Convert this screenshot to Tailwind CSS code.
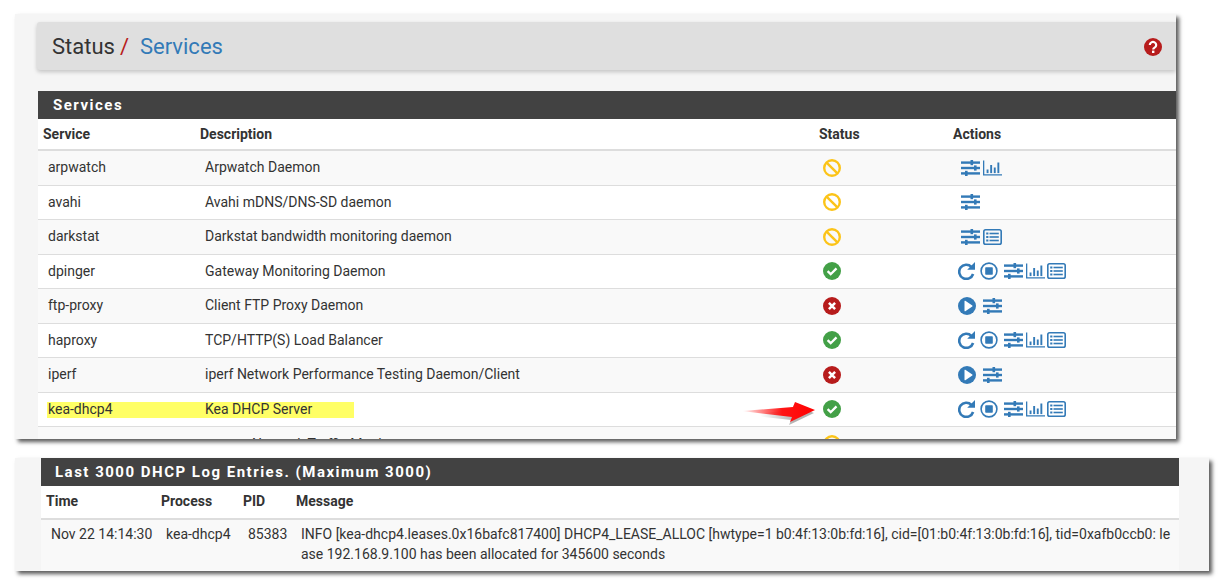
<!DOCTYPE html>
<html><head><meta charset="utf-8"><script src="https://cdn.jsdelivr.net/npm/@tailwindcss/browser@4"></script></head>
<body class="bg-white w-[1226px] h-[587px] overflow-hidden font-['Roboto',sans-serif] text-[#333]">
<svg class="hidden">
<symbol id="sl" viewBox="0 0 19 16"><g fill="#337ab7"><rect x="0" y="1.4" width="19" height="2.4"/><rect x="0" y="6.8" width="19" height="2.4"/><rect x="0" y="12.2" width="19" height="2.4"/><rect x="9.5" y="0" width="2.6" height="5.2"/><rect x="13" y="5.4" width="2.6" height="5.2"/><rect x="4" y="10.8" width="2.6" height="5.2"/></g></symbol>
<symbol id="ch" viewBox="0 0 19 16"><g fill="#337ab7"><path d="M0 .5h1.3v13.7H19v1.4H0z"/><rect x="3.6" y="9.5" width="1.9" height="3.6"/><rect x="7.2" y="5" width="1.9" height="8.1"/><rect x="10.8" y="7.5" width="1.9" height="5.6"/><rect x="14.4" y="2.5" width="1.9" height="10.6"/></g></symbol>
<symbol id="li" viewBox="0 0 19 16"><rect x=".8" y=".8" width="17.4" height="14.4" rx="1.8" fill="none" stroke="#337ab7" stroke-width="1.6"/><g fill="#337ab7"><rect x="3.2" y="3.5" width="2.2" height="2"/><rect x="3.2" y="7" width="2.2" height="2"/><rect x="3.2" y="10.5" width="2.2" height="2"/><rect x="6.5" y="3.7" width="9.3" height="1.6"/><rect x="6.5" y="7.2" width="9.3" height="1.6"/><rect x="6.5" y="10.7" width="9.3" height="1.6"/></g></symbol>
<symbol id="re" viewBox="0 0 17 18"><path d="M13.4 4.8A7.1 7.1 0 1 0 15.1 12" fill="none" stroke="#337ab7" stroke-width="2.6"/><path d="M17 0v7.8H9.2z" fill="#337ab7"/></symbol>
<symbol id="st" viewBox="0 0 18 18"><circle cx="9" cy="9" r="7.9" fill="none" stroke="#337ab7" stroke-width="1.6"/><rect x="5.2" y="5.2" width="7.6" height="7.6" rx=".8" fill="#337ab7"/></symbol>
<symbol id="pl" viewBox="0 0 18 18"><circle cx="9" cy="9" r="9" fill="#337ab7"/><path d="M6.5 4.2v9.6a.5.5 0 0 0 .8.4l7-4.8a.5.5 0 0 0 0-.8l-7-4.8a.5.5 0 0 0-.8.4z" fill="#fff"/></symbol>
<symbol id="ban" viewBox="0 0 18 18"><circle cx="9" cy="9" r="7.8" fill="none" stroke="#fcc419" stroke-width="2.4"/><path d="M3.6 3.6 14.4 14.4" stroke="#fcc419" stroke-width="2.4"/></symbol>
<symbol id="ok" viewBox="0 0 18 18"><circle cx="9" cy="9" r="9" fill="#43a047"/><path d="M4.6 9.2 7.7 12.2 13.5 6.4" fill="none" stroke="#fff" stroke-width="2.3"/></symbol>
<symbol id="no" viewBox="0 0 18 18"><circle cx="9" cy="9" r="9" fill="#b71c1c"/><path d="M5.9 5.9 12.1 12.1M12.1 5.9 5.9 12.1" fill="none" stroke="#fff" stroke-width="2.5"/></symbol>
</svg>

<main class="pt-[14px] pl-[15px]">
<section class="relative w-[1161px] h-[425px] overflow-hidden bg-[#f5f5f5]">
  <div class="ml-[22px] mt-[8px] h-[48px] bg-[#dfdfdf] shadow-[0_2px_4px_rgba(0,0,0,0.2)] flex items-center justify-between pl-[15px] pr-[14px] rounded-l-[3px]">
    <h1 class="text-[22px] leading-none font-normal flex mt-[2px]"><span>Status</span><span class="text-[#b71c1c] ml-[5px]">/</span><span class="text-[#337ab7] ml-[11px]">Services</span></h1>
    <svg class="w-[18px] h-[18px] mt-[2px]" viewBox="0 0 18 18"><circle cx="9" cy="9" r="9" fill="#b71c1c"/><path d="M5.8 7a3.2 3 0 1 1 4.8 2.6c-1 .6-1.4 1-1.4 2" fill="none" stroke="#fff" stroke-width="2.2"/><rect x="8" y="12.6" width="2.4" height="2.4" fill="#fff"/></svg>
  </div>
  <div class="ml-[23px] mt-[21px] h-[28px] bg-[#424242] text-white font-bold text-[15px] tracking-[1.5px] pl-[15px] flex items-center">Services</div>
  <div class="ml-[23px] bg-white text-[14px]">
    <div class="grid grid-cols-[157px_619px_134px_1fr] h-[32px] border-b-2 border-[#ddd] items-center font-bold"><span class="pl-[5px]">Service</span><span class="pl-[5px]">Description</span><span class="pl-[5px]">Status</span><span class="pl-[5px]">Actions</span></div>

    <div class="grid grid-cols-[157px_619px_134px_1fr] h-[34.5px] border-b border-[#ddd] items-center bg-[#f9f9f9]"><span class="pl-[10px]">arpwatch</span><span class="pl-[10px]">Arpwatch Daemon</span><svg class="w-[18px] h-[18px] ml-[9px]"><use href="#ban"/></svg><div class="flex items-center gap-[3px] pl-[13px]"><svg class="w-[19px] h-[16px]"><use href="#sl"/></svg><svg class="w-[19px] h-[16px]"><use href="#ch"/></svg></div></div>
    <div class="grid grid-cols-[157px_619px_134px_1fr] h-[34.5px] border-b border-[#ddd] items-center"><span class="pl-[10px]">avahi</span><span class="pl-[10px]">Avahi mDNS/DNS-SD daemon</span><svg class="w-[18px] h-[18px] ml-[9px]"><use href="#ban"/></svg><div class="flex items-center gap-[3px] pl-[13px]"><svg class="w-[19px] h-[16px]"><use href="#sl"/></svg></div></div>
    <div class="grid grid-cols-[157px_619px_134px_1fr] h-[34.5px] border-b border-[#ddd] items-center bg-[#f9f9f9]"><span class="pl-[10px]">darkstat</span><span class="pl-[10px]">Darkstat bandwidth monitoring daemon</span><svg class="w-[18px] h-[18px] ml-[9px]"><use href="#ban"/></svg><div class="flex items-center gap-[3px] pl-[13px]"><svg class="w-[19px] h-[16px]"><use href="#sl"/></svg><svg class="w-[19px] h-[16px]"><use href="#li"/></svg></div></div>
    <div class="grid grid-cols-[157px_619px_134px_1fr] h-[34.5px] border-b border-[#ddd] items-center"><span class="pl-[10px]">dpinger</span><span class="pl-[10px]">Gateway Monitoring Daemon</span><svg class="w-[18px] h-[18px] ml-[9px]"><use href="#ok"/></svg><div class="flex items-center pl-[10px]"><svg class="w-[17px] h-[18px]"><use href="#re"/></svg><svg class="w-[18px] h-[18px] ml-[5px]"><use href="#st"/></svg><svg class="w-[19px] h-[16px] ml-[6px]"><use href="#sl"/></svg><svg class="w-[19px] h-[16px] ml-[3px]"><use href="#ch"/></svg><svg class="w-[19px] h-[16px] ml-[2px]"><use href="#li"/></svg></div></div>
    <div class="grid grid-cols-[157px_619px_134px_1fr] h-[34.5px] border-b border-[#ddd] items-center bg-[#f9f9f9]"><span class="pl-[10px]">ftp-proxy</span><span class="pl-[10px]">Client FTP Proxy Daemon</span><svg class="w-[18px] h-[18px] ml-[9px]"><use href="#no"/></svg><div class="flex items-center pl-[10px]"><svg class="w-[18px] h-[18px]"><use href="#pl"/></svg><svg class="w-[19px] h-[16px] ml-[7px]"><use href="#sl"/></svg></div></div>
    <div class="grid grid-cols-[157px_619px_134px_1fr] h-[34.5px] border-b border-[#ddd] items-center"><span class="pl-[10px]">haproxy</span><span class="pl-[10px]">TCP/HTTP(S) Load Balancer</span><svg class="w-[18px] h-[18px] ml-[9px]"><use href="#ok"/></svg><div class="flex items-center pl-[10px]"><svg class="w-[17px] h-[18px]"><use href="#re"/></svg><svg class="w-[18px] h-[18px] ml-[5px]"><use href="#st"/></svg><svg class="w-[19px] h-[16px] ml-[6px]"><use href="#sl"/></svg><svg class="w-[19px] h-[16px] ml-[3px]"><use href="#ch"/></svg><svg class="w-[19px] h-[16px] ml-[2px]"><use href="#li"/></svg></div></div>
    <div class="grid grid-cols-[157px_619px_134px_1fr] h-[34.5px] border-b border-[#ddd] items-center bg-[#f9f9f9]"><span class="pl-[10px]">iperf</span><span class="pl-[10px]">iperf Network Performance Testing Daemon/Client</span><svg class="w-[18px] h-[18px] ml-[9px]"><use href="#no"/></svg><div class="flex items-center pl-[10px]"><svg class="w-[18px] h-[18px]"><use href="#pl"/></svg><svg class="w-[19px] h-[16px] ml-[7px]"><use href="#sl"/></svg></div></div>
    <div class="relative grid grid-cols-[157px_619px_134px_1fr] h-[34.5px] border-b border-[#ddd] items-center"><div class="absolute left-[9px] top-[9px] w-[307px] h-[16px] bg-[#ffff66]"></div><span class="relative pl-[10px]">kea-dhcp4</span><span class="relative pl-[10px]">Kea DHCP Server</span><svg class="w-[18px] h-[18px] ml-[9px]"><use href="#ok"/></svg><div class="flex items-center pl-[10px]"><svg class="w-[17px] h-[18px]"><use href="#re"/></svg><svg class="w-[18px] h-[18px] ml-[5px]"><use href="#st"/></svg><svg class="w-[19px] h-[16px] ml-[6px]"><use href="#sl"/></svg><svg class="w-[19px] h-[16px] ml-[3px]"><use href="#ch"/></svg><svg class="w-[19px] h-[16px] ml-[2px]"><use href="#li"/></svg></div></div>
    <div class="grid grid-cols-[157px_619px_134px_1fr] h-[34.5px] items-center bg-[#f9f9f9]"><span></span><span class="pl-[57px]">Network Traffic Monitor</span><svg class="w-[18px] h-[18px] ml-[9px]"><use href="#ban"/></svg><span></span></div>
  </div>
  <svg class="absolute left-[725px] top-[382px] w-[80px] h-[30px]" viewBox="0 0 80 30">
    <defs>
      <linearGradient id="ar" x1="0" x2="1" y1="0" y2="0"><stop offset="0" stop-color="#ff0000" stop-opacity="0"/><stop offset=".55" stop-color="#ff1515"/><stop offset="1" stop-color="#f00"/></linearGradient>
      <linearGradient id="sh" x1="0" x2="1" y1="0" y2="0"><stop offset="0.2" stop-color="#000" stop-opacity="0"/><stop offset=".7" stop-color="#000" stop-opacity=".3"/></linearGradient>
    </defs>
    <path d="M8 17 53 12 55 7 75 15 50 27 52 22z" fill="url(#sh)" transform="translate(-1 2)"/>
    <path d="M2 15 53 11 55 6 75 14 50 26 52 21z" fill="url(#ar)"/>
  </svg>
</section>
<div class="absolute left-[15px] top-[14px] w-[1161px] h-[425px] pointer-events-none shadow-[3px_3px_4px_rgba(0,0,0,0.65)]"></div>

<section class="relative mt-[19px] w-[1194px] h-[113px] bg-[#f5f5f5] shadow-[3px_3px_4px_rgba(0,0,0,0.65)]">
  <div class="ml-[26px] w-[1138px]">
    <div class="h-[28px] bg-[#424242] text-white font-bold text-[15px] tracking-[1.5px] pl-[14px] flex items-center">Last 3000 DHCP Log Entries. (Maximum 3000)</div>
    <div class="grid grid-cols-[115px_82px_53px_1fr] text-[14px] bg-white">
      <div class="contents font-bold"><span class="h-[34px] border-b-2 border-[#ddd] pl-[5px] pt-[5px]">Time</span><span class="h-[34px] border-b-2 border-[#ddd] pl-[5px] pt-[5px]">Process</span><span class="h-[34px] border-b-2 border-[#ddd] pl-[5px] pt-[5px]">PID</span><span class="h-[34px] border-b-2 border-[#ddd] pl-[5px] pt-[5px]">Message</span></div>
      <div class="contents leading-[20px]"><span class="h-[51px] bg-[#f9f9f9] pl-[10px] pt-[4px]">Nov 22 14:14:30</span><span class="h-[51px] bg-[#f9f9f9] pl-[10px] pt-[4px]">kea-dhcp4</span><span class="h-[51px] bg-[#f9f9f9] pl-[10px] pt-[4px]">85383</span><span class="h-[51px] bg-[#f9f9f9] pl-[10px] pt-[4px] whitespace-nowrap">INFO [kea-dhcp4.leases.0x16bafc817400] DHCP4_LEASE_ALLOC [hwtype=1 b0:4f:13:0b:fd:16], cid=[01:b0:4f:13:0b:fd:16], tid=0xafb0ccb0: le<br>ase 192.168.9.100 has been allocated for 345600 seconds</span></div>
    </div>
  </div>
</section>
</main>
</body></html>
